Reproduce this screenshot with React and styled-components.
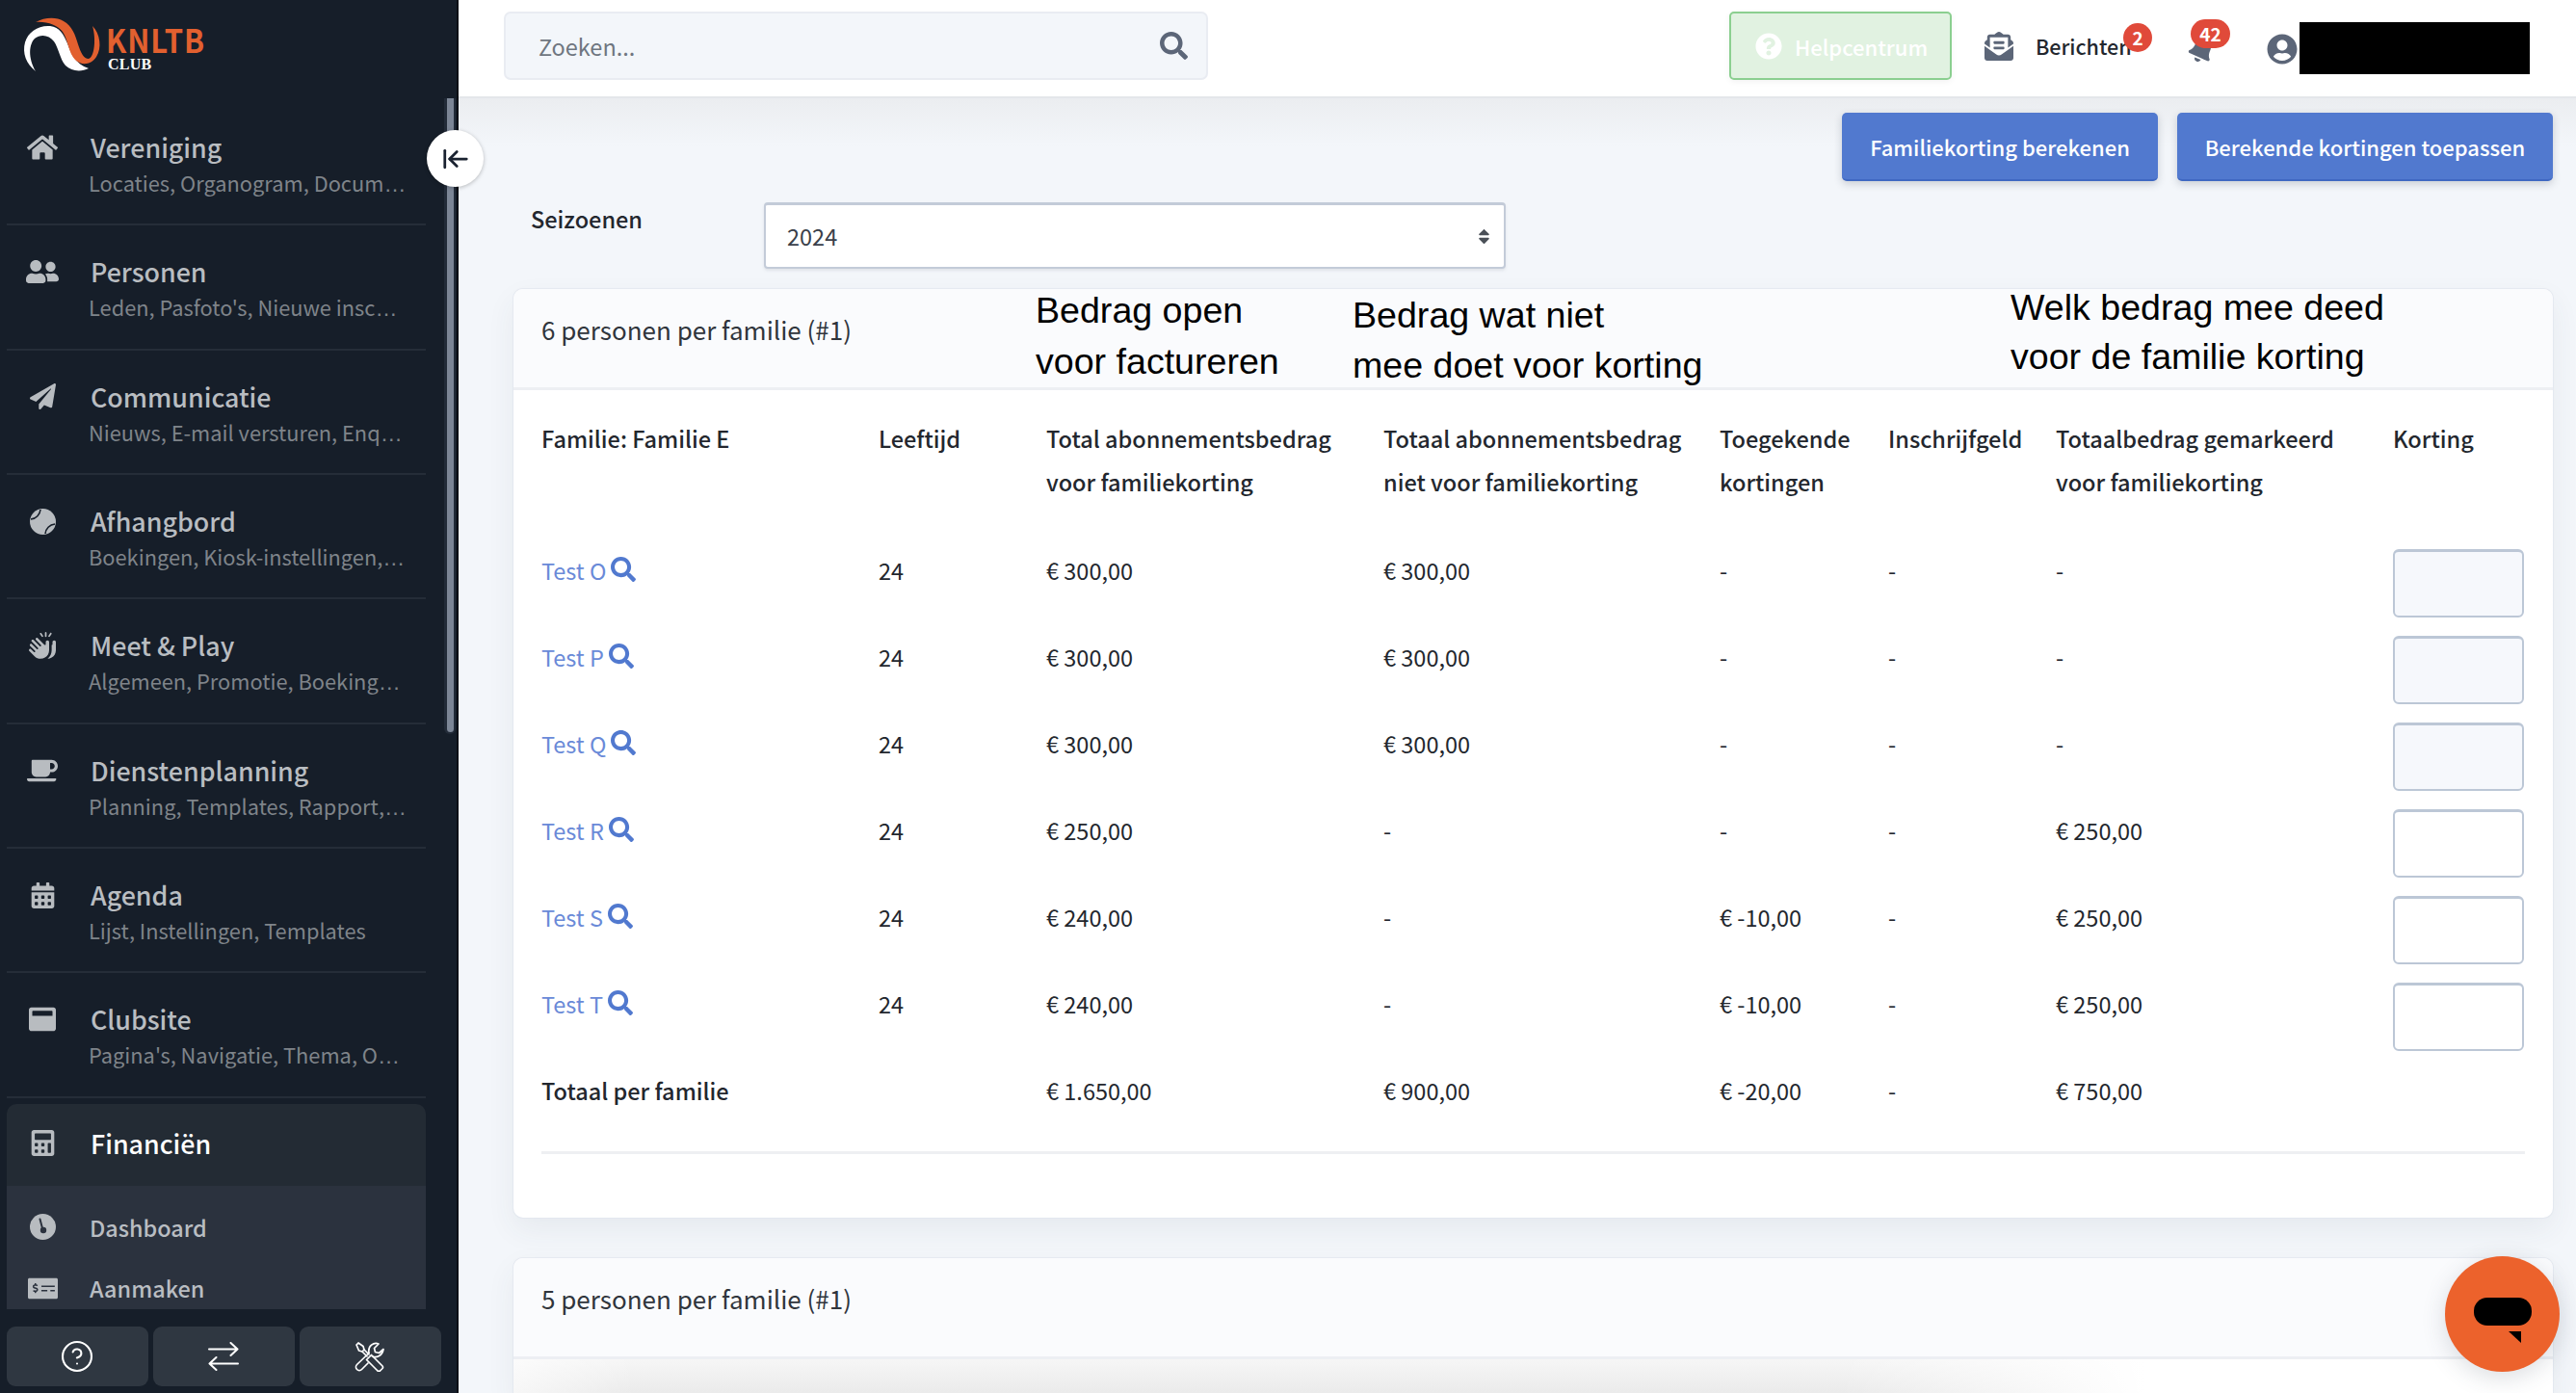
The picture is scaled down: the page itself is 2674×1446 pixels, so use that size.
import React from 'react';
import styled, { createGlobalStyle } from 'styled-components';
import { ArrowLeftToLine, CircleHelp } from 'lucide-react';
import { FaHome, FaUserFriends, FaPaperPlane, FaCoffee, FaCalendarAlt, FaWindowMaximize, FaCalculator, FaMoneyCheckAlt, FaSearch, FaQuestionCircle, FaEnvelopeOpenText, FaBell, FaUserCircle, FaSort } from 'react-icons/fa';
import { FaHandsClapping } from 'react-icons/fa6';

const SANS = '"Noto Sans CJK SC", "Noto Sans", sans-serif';

const Global = createGlobalStyle`
  html, body { margin: 0; padding: 0; height: 100%; overflow: hidden; }
  #root { height: 100%; }
  * { box-sizing: border-box; }
  body { font-family: ${SANS}; color: #23272e; background: #f3f6fa; }
`;

const Shell = styled.div`
  display: flex;
  height: 1446px;
  width: 2674px;
  overflow: hidden;
  position: relative;
`;

const Sidebar = styled.aside`
  width: 476px;
  flex: none;
  display: flex;
  flex-direction: column;
  background: #161e29;
  border-right: 2px solid #0b0f15;
  position: relative;
`;

const LogoRow = styled.div`
  height: 105px;
  flex: none;
  display: flex;
`;

const LogoText = styled.div`
  display: flex;
  flex-direction: column;
  padding-top: 23px;
  margin-left: -1px;
`;

const LogoName = styled.div`
  font-weight: 700;
  font-size: 34px;
  line-height: 36px;
  letter-spacing: 1px;
  color: #e2602f;
  transform: scaleX(.91);
  transform-origin: left center;
`;

const LogoSub = styled.div`
  font-family: "Liberation Serif", serif;
  font-weight: 700;
  font-size: 16px;
  line-height: 15px;
  color: #fff;
  letter-spacing: 0.2px;
  padding-left: 2px;
`;

const Nav = styled.nav`
  height: 1255px;
  flex: none;
  padding: 0 0 0 7px;
  width: 442px;
  overflow: hidden;
`;

const Item = styled.div`
  height: 129.35px;
  display: grid;
  grid-template-columns: 74px 1fr;
  column-gap: 12px;
  padding-top: 29px;
  border-bottom: 2px solid #252d38;
`;

const Icon = styled.div`
  height: 38px;
  display: flex;
  align-items: center;
  justify-content: center;
  color: ${p => p.$color || '#b8bcc0'};
  font-size: ${p => p.$size || 30}px;
`;

const ItemText = styled.div`
  min-width: 0;
`;

const Title = styled.div`
  font-size: 26.8px;
  line-height: 38px;
  font-weight: 500;
  padding-left: 1px;
  color: ${p => p.$active ? '#ffffff' : '#b9bdc1'};
`;

const Sub = styled.div`
  font-size: 21.8px;
  line-height: 36px;
  margin-left: -1px;
  color: #7f848a;
  white-space: nowrap;
`;

const Ell = styled.span`
  font-family: "Liberation Sans", sans-serif;
  font-size: 23px;
`;

const ActiveItem = styled.div`
  margin-top: 6px;
  height: 85px;
  display: grid;
  grid-template-columns: 74px 1fr;
  column-gap: 12px;
  padding-top: 22px;
  background: #232b34;
  border-radius: 10px 10px 0 0;
`;

const SubMenu = styled.div`
  height: 128px;
  overflow: hidden;
  background: #2b323e;
  padding-top: 24px;
`;

const SubItem = styled.div`
  height: 63.5px;
  display: grid;
  grid-template-columns: 74px 1fr;
  column-gap: 12px;
  font-size: 23.4px;
  font-weight: 500;
  line-height: 38px;
  color: #b9bdc2;
`;

const BottomBar = styled.div`
  display: flex;
  gap: 5.5px;
  padding: 17px 0 0 7px;
`;

const BottomButton = styled.button`
  width: 146.5px;
  height: 62px;
  padding: 0;
  border: 0;
  border-radius: 9px;
  background: #2f3741;
  color: #fff;
  display: flex;
  align-items: center;
  justify-content: center;
`;

const Scrollbar = styled.div`
  position: absolute;
  left: 461px;
  top: 102px;
  width: 12px;
  height: 660px;
  background: #222b38;
  border-radius: 0 0 6px 6px;
  padding: 0 2px 2px 3px;
`;

const ScrollThumb = styled.div`
  width: 100%;
  height: 100%;
  background: #7c8696;
  border-radius: 0 0 4px 4px;
`;

const Toggle = styled.button`
  position: absolute;
  left: 443px;
  top: 135px;
  width: 59px;
  height: 59px;
  border-radius: 50%;
  border: 0;
  padding: 0;
  background: #fff;
  box-shadow: 0 1px 4px rgba(0, 0, 0, .25);
  display: flex;
  align-items: center;
  justify-content: center;
  color: #1a2230;
  z-index: 3;
`;

const Main = styled.main`
  flex: 1;
  min-width: 0;
  display: flex;
  flex-direction: column;
  background: #f3f6fa;
`;

const Topbar = styled.header`
  height: 102px;
  flex: none;
  background: #fff;
  border-bottom: 2px solid #e4e6ea;
  display: flex;
  align-items: flex-start;
  padding: 12px 48px 0 47px;
`;

const Search = styled.div`
  width: 731px;
  height: 71px;
  background: #f3f6fa;
  border: 2px solid #e9ecf2;
  border-radius: 7px;
  display: flex;
  align-items: center;
  justify-content: space-between;
  padding: 0 19px 0 34px;
  font-size: 23.5px;
  color: #6f7680;
`;

const SearchIcon = styled.span`
  display: flex;
  color: #5c6678;
  font-size: 29px;
`;

const TopRight = styled.div`
  margin-left: auto;
  display: flex;
  align-items: center;
  height: 71px;
`;

const HelpButton = styled.div`
  width: 231px;
  height: 71px;
  background: #e1f2e1;
  border: 2px solid #8bcf90;
  border-radius: 5px;
  color: #fff;
  font-size: 22px;
  font-weight: 500;
  display: flex;
  align-items: center;
  gap: 13px;
  padding-left: 25px;
  box-shadow: 0 2px 6px rgba(0,0,0,.05);
`;

const Messages = styled.div`
  margin-left: 34px;
  display: flex;
  align-items: center;
  gap: 23px;
  position: relative;
  color: #5c6678;
  font-size: 30px;
`;

const MessageLabel = styled.span`
  font-size: 21.5px;
  font-weight: 500;
  color: #23272e;
  width: 100px;
`;

const Badge = styled.span`
  position: absolute;
  top: ${p => p.$top}px;
  right: ${p => p.$right}px;
  min-width: ${p => p.$w}px;
  height: 30px;
  border-radius: 15px;
  background: #e04a3a;
  color: #fff;
  font-size: 19px;
  font-weight: 700;
  line-height: 30px;
  text-align: center;
`;

const Bell = styled.div`
  margin-left: 59px;
  width: 28px;
  position: relative;
  display: flex;
  color: #5c6678;
  font-size: 27px;
  padding-top: 8px;
  svg { transform: rotate(24deg); }
`;

const UserIcon = styled.div`
  margin-left: 53px;
  display: flex;
  color: #5c6678;
  font-size: 32px;
  margin-top: 6px;
`;

const Redacted = styled.div`
  margin-left: 2px;
  width: 239px;
  height: 54px;
  background: #000;
  margin-top: 5px;
`;

const Content = styled.div`
  flex: 1;
  min-height: 0;
  overflow: hidden;
  padding: 15px 24px 0 57px;
  background: linear-gradient(180deg, #ebedf0 0, #f3f6fa 50px);
  position: relative;
`;

const Actions = styled.div`
  display: flex;
  justify-content: flex-end;
  gap: 20px;
`;

const ActionButton = styled.button`
  height: 71px;
  width: ${p => p.$w}px;
  background: #5179cf;
  color: #fff;
  border: 0;
  border-bottom: 2px solid #3f68c2;
  border-radius: 5px;
  font-family: ${SANS};
  font-size: 22px;
  font-weight: 500;
  box-shadow: 0 3px 8px rgba(30, 40, 60, .2);
`;

const SeasonRow = styled.div`
  margin-top: 22px;
  display: flex;
  padding-left: 18px;
`;

const SeasonLabel = styled.label`
  width: 242px;
  font-size: 23.5px;
  font-weight: 500;
  line-height: 34px;
`;

const Select = styled.div`
  width: 770px;
  height: 69px;
  background: #fff;
  border: 2px solid #c3cbd8;
  border-top-width: 3px;
  border-radius: 4px;
  display: flex;
  align-items: center;
  justify-content: space-between;
  padding: 0 11px 0 22px;
  font-size: 23.5px;
  color: #3a3f4a;
  box-shadow: 0 2px 3px rgba(60,70,90,.1);
`;

const SortIcon = styled.span`
  display: flex;
  font-size: 19px;
  color: #4a5058;
`;

const Card = styled.section`
  margin-top: ${p => p.$mt}px;
  background: #fff;
  border-radius: 10px 10px ${p => p.$open ? 0 : 10}px ${p => p.$open ? 0 : 10}px;
  box-shadow: 0 0 0 1px rgba(225, 230, 238, .7), 0 12px 30px rgba(60, 70, 90, .07);
  position: relative;
`;

const CardHeader = styled.div`
  height: 105px;
  padding: 0 29px 20px;
  background: #fafbfd;
  border-bottom: 3px solid #edeff3;
  border-radius: 10px 10px 0 0;
  display: flex;
  align-items: center;
  font-size: 26px;
  font-weight: 400;
  color: #30353c;
`;

const Note = styled.div`
  position: absolute;
  left: ${p => p.$x}px;
  top: ${p => p.$y}px;
  font-family: "Liberation Sans", Arial, sans-serif;
  font-size: 37.6px;
  line-height: ${p => p.$lh}px;
  color: #000;
  white-space: nowrap;
`;

const TableWrap = styled.div`
  padding: 28px 29px 0;
  height: 859px;
`;

const Row = styled.div`
  display: grid;
  grid-template-columns: 350px 174px 350px 349px 175px 174px 350px 137px;
  height: ${p => p.$h}px;
  font-size: 23.5px;
  line-height: 45px;
  font-weight: ${p => p.$bold ? 500 : 400};
  color: #23272e;
`;

const Cell = styled.div`
  white-space: pre-line;
  font-weight: ${p => p.$bold ? 500 : 'inherit'};
`;

const Person = styled.a`
  color: #6a8ad8;
  text-decoration: none;
  display: inline-flex;
  align-items: center;
  gap: 5px;
  svg { color: #5179cf; font-size: 26px; margin-top: -3px; }
`;

const Discount = styled.div`
  width: 136px;
  height: 71px;
  background: ${p => p.$off ? '#f6f8fc' : '#fff'};
  border: 2px solid #bcc7d6;
  border-top-width: 3px;
  border-radius: 6px;
`;

const Divider = styled.div`
  height: 3px;
  background: #eeeff2;
`;

const FadeBody = styled.div`
  height: 40px;
  background:
    linear-gradient(90deg, rgba(255,255,255,.6) 0, rgba(255,255,255,0) 6%, rgba(255,255,255,0) 65%, #fff 80%),
    linear-gradient(180deg, #f6f6f6, #e9e9e9);
`;

const Chat = styled.div`
  position: absolute;
  left: 2538px;
  top: 1304px;
  width: 119px;
  height: 120px;
  border-radius: 50%;
  background: #ec622c;
  box-shadow: 0 6px 24px rgba(60, 70, 90, .18);
  z-index: 4;
`;

const ChatPill = styled.div`
  margin: 43px auto 0;
  width: 60px;
  height: 29px;
  background: #000;
  border-radius: 14px;
`;

const ChatTail = styled.div`
  margin: 6px 0 0 66px;
  width: 13px;
  height: 12px;
  background: #000;
  clip-path: polygon(0 0, 100% 0, 100% 100%);
`;

const Ball = () => (
  <svg width="27" height="27" viewBox="0 0 27 27">
    <circle cx="13.5" cy="13.5" r="13.5" fill="currentColor" />
    <path d="M11 1C10.500 6 6.500 10.500 1 11M26 16C20.500 16.500 16.500 21 16 26" fill="none" stroke="#161e29" strokeWidth="1.600" />
  </svg>
);

const Gauge = () => (
  <svg width="27" height="27" viewBox="0 0 27 27">
    <circle cx="13.5" cy="13.5" r="13.5" fill="currentColor" />
    <path d="M10.500 5.500L13 15" stroke="#2b323e" strokeWidth="2" strokeLinecap="round" />
    <circle cx="14" cy="17" r="3.200" fill="#2b323e" />
  </svg>
);

const Swap = () => (
  <svg width="32" height="30" viewBox="0 0 32 30" fill="none" stroke="currentColor" strokeWidth="2" strokeLinecap="round" strokeLinejoin="round">
    <path d="M1 7.500H30M23.500 1L30.500 7.500L23.500 14" />
    <path d="M31 22.500H2M8.500 16L1.500 22.500L8.500 29" />
  </svg>
);

const Tools = () => (
  <svg width="32" height="31" viewBox="0 0 32 31" fill="none" stroke="currentColor" strokeWidth="1.700" strokeLinecap="round" strokeLinejoin="round">
    <path d="M2 3L4 1L9 4.500L10 8L8 10L4.500 9Z" />
    <path d="M10 8L15 13M8 10L13 15" />
    <path d="M17.500 13.500L29 25A2 2 0 0 1 29 27.500L26.500 30A2 2 0 0 1 24 30L12.500 18.500Z" />
    <path d="M18.500 15C23 17 29 14 30 7.500L25.500 11.500L21.500 10.500L20.500 6.500L25 2C20 0 13.500 4 15 11.500" />
    <path d="M15 11.500L2.500 23.500A3.500 3.500 0 0 0 7.500 28.500L14 22" />
  </svg>
);

const LogoMark = () => (
  <svg width="111" height="90" viewBox="0 0 111 90">
    <path fill="#fff" d="M37 74C27 66 23 55 26 44C29 33 40 26 52 27C62 28 66 36 70 45C74 56 78 66 92 71C84 75 74 74 68 68C62 61 61 50 56 43C51 36 42 35 36 40C30 46 29 60 37 74Z" />
    <path fill="#e2602f" d="M37 23C46 18 58 17 66 22C75 27 78 36 81 46C84 55 87 61 92 61C98 60 100 40 96 27C104 35 106 50 100 59C94 68 84 68 78 62C71 55 71 42 65 33C60 26 48 22 37 23Z" />
  </svg>
);

const menu = [
  [<FaHome />, 'Vereniging', 'Locaties, Organogram, Docum', 32, true],
  [<FaUserFriends />, 'Personen', "Leden, Pasfoto's, Nieuwe insc", 34, true],
  [<FaPaperPlane />, 'Communicatie', 'Nieuws, E-mail versturen, Enq', 27, true],
  [<Ball />, 'Afhangbord', 'Boekingen, Kiosk-instellingen,', 27, true],
  [<FaHandsClapping />, 'Meet & Play', 'Algemeen, Promotie, Boeking', 28, true],
  [<FaCoffee />, 'Dienstenplanning', 'Planning, Templates, Rapport,', 32, true],
  [<FaCalendarAlt />, 'Agenda', 'Lijst, Instellingen, Templates', 27, false],
  [<FaWindowMaximize />, 'Clubsite', "Pagina's, Navigatie, Thema, O", 28, true],
];

const rows = [
  ['Test O', '€ 300,00', '€ 300,00', '-', '-', '-', true],
  ['Test P', '€ 300,00', '€ 300,00', '-', '-', '-', true],
  ['Test Q', '€ 300,00', '€ 300,00', '-', '-', '-', true],
  ['Test R', '€ 250,00', '-', '-', '-', '€ 250,00', false],
  ['Test S', '€ 240,00', '-', '€ -10,00', '-', '€ 250,00', false],
  ['Test T', '€ 240,00', '-', '€ -10,00', '-', '€ 250,00', false],
];

export default function App() {
  return (
    <Shell>
      <Global />
      <Sidebar>
        <LogoRow>
          <LogoMark />
          <LogoText>
            <LogoName>KNLTB</LogoName>
            <LogoSub>CLUB</LogoSub>
          </LogoText>
        </LogoRow>
        <Nav>
          {menu.map(([icon, title, sub, size, cut]) => (
            <Item key={title}>
              <Icon $size={size}>{icon}</Icon>
              <ItemText>
                <Title>{title}</Title>
                <Sub>{sub}{cut && <Ell>…</Ell>}</Sub>
              </ItemText>
            </Item>
          ))}
          <ActiveItem>
            <Icon $size={27}><FaCalculator /></Icon>
            <Title $active>Financiën</Title>
          </ActiveItem>
          <SubMenu>
            <SubItem><Icon $size={27}><Gauge /></Icon><span>Dashboard</span></SubItem>
            <SubItem><Icon $size={31}><FaMoneyCheckAlt /></Icon><span>Aanmaken</span></SubItem>
          </SubMenu>
        </Nav>
        <BottomBar>
          <BottomButton><CircleHelp size={36} strokeWidth={1.4} /></BottomButton>
          <BottomButton><Swap /></BottomButton>
          <BottomButton><Tools /></BottomButton>
        </BottomBar>
        <Scrollbar><ScrollThumb /></Scrollbar>
        <Toggle><ArrowLeftToLine size={30} strokeWidth={2.2} /></Toggle>
      </Sidebar>
      <Main>
        <Topbar>
          <Search>
            <span>Zoeken...</span>
            <SearchIcon><FaSearch /></SearchIcon>
          </Search>
          <TopRight>
            <HelpButton><FaQuestionCircle size={28} /><span>Helpcentrum</span></HelpButton>
            <Messages>
              <FaEnvelopeOpenText />
              <MessageLabel>Berichten</MessageLabel>
              <Badge $top={-8} $right={-21} $w={30}>2</Badge>
            </Messages>
            <Bell>
              <FaBell />
              <Badge $top={-10} $right={-15} $w={41}>42</Badge>
            </Bell>
            <UserIcon><FaUserCircle /></UserIcon>
            <Redacted />
          </TopRight>
        </Topbar>
        <Content>
          <Actions>
            <ActionButton $w={328}>Familiekorting berekenen</ActionButton>
            <ActionButton $w={390}>Berekende kortingen toepassen</ActionButton>
          </Actions>
          <SeasonRow>
            <SeasonLabel>Seizoenen</SeasonLabel>
            <Select><span>2024</span><SortIcon><FaSort /></SortIcon></Select>
          </SeasonRow>
          <Card $mt={21}>
            <CardHeader>6 personen per familie (#1)</CardHeader>
            <Note $x={542} $y={-4} $lh={53}>Bedrag open<br />voor factureren</Note>
            <Note $x={871} $y={1} $lh={52}>Bedrag wat niet<br />mee doet voor korting</Note>
            <Note $x={1554} $y={-6} $lh={51}>Welk bedrag mee deed<br />voor de familie korting</Note>
            <TableWrap>
              <Row $h={137} $bold>
                <Cell>Familie: Familie E</Cell>
                <Cell>Leeftijd</Cell>
                <Cell>{'Total abonnementsbedrag\nvoor familiekorting'}</Cell>
                <Cell>{'Totaal abonnementsbedrag\nniet voor familiekorting'}</Cell>
                <Cell>{'Toegekende\nkortingen'}</Cell>
                <Cell>Inschrijfgeld</Cell>
                <Cell>{'Totaalbedrag gemarkeerd\nvoor familiekorting'}</Cell>
                <Cell>Korting</Cell>
              </Row>
              {rows.map(r => (
                <Row key={r[0]} $h={90}>
                  <Cell><Person>{r[0]}<FaSearch /></Person></Cell>
                  <Cell>24</Cell>
                  <Cell>{r[1]}</Cell>
                  <Cell>{r[2]}</Cell>
                  <Cell>{r[3]}</Cell>
                  <Cell>{r[4]}</Cell>
                  <Cell>{r[5]}</Cell>
                  <Cell><Discount $off={r[6]} /></Cell>
                </Row>
              ))}
              <Row $h={85}>
                <Cell $bold>Totaal per familie</Cell>
                <Cell />
                <Cell>€ 1.650,00</Cell>
                <Cell>€ 900,00</Cell>
                <Cell>€ -20,00</Cell>
                <Cell>-</Cell>
                <Cell>€ 750,00</Cell>
                <Cell />
              </Row>
              <Divider />
            </TableWrap>
          </Card>
          <Card $mt={42} $open>
            <CardHeader>5 personen per familie (#1)</CardHeader>
            <FadeBody />
          </Card>
        </Content>
      </Main>
      <Chat><ChatPill /><ChatTail /></Chat>
    </Shell>
  );
}
